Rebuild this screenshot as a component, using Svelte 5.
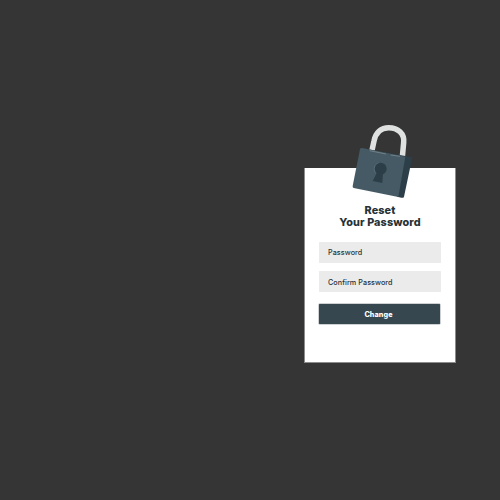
<script>
  let password = $state('');
  let confirmation = $state('');
</script>

<main>
  <form class="card" onsubmit={(event) => event.preventDefault()}>
    <svg class="lock" viewBox="0 0 240 270" aria-hidden="true">
      <path d="M96 106 L102 78 C107 51 124 38 146 38 C174 38 194 56 191 83 L187 126" fill="none" stroke="#dfe1e1" stroke-width="16.5" />
      <path d="M65 99 L212 126 Q217 127 216 131 L192 245 Q190 250 184 248 L171 245 L192 129 Z" fill="#2c3f48" />
      <path d="M66 99 L196 125 L175 246 L41 219 Q37 218 38 213 L60 103 Q61 98 66 99 Z" fill="#455a64" />
      <path d="M89 107 L138 117 M152 120 L180 124" fill="none" stroke="#879499" stroke-width="2" />
      <path d="M107 173 A18 18 0 0 1 116 144" fill="none" stroke="#687c85" stroke-width="2" />
      <circle cx="122" cy="161" r="18" fill="#2c3f48" />
      <path d="M112 170 L98 198 L127 204 L129 172 Z" fill="#2c3f48" />
    </svg>
    <h1><span>Reset</span><span>Your Password</span></h1>
    <input class="first" type="text" placeholder="Password" aria-label="Password" bind:value={password} />
    <input class="second" type="text" placeholder="Confirm Password" aria-label="Confirm Password" bind:value={confirmation} />
    <button type="submit">Change</button>
  </form>
</main>

<style>
  :global(body) { margin: 0; background: #353535; }
  main {
    box-sizing: border-box;
    width: 500px;
    height: 500px;
    padding: 168px 0 0 304px;
    background: #353535;
    font-family: Inter, "Liberation Sans", sans-serif;
  }
  .card {
    position: relative;
    box-sizing: border-box;
    display: flex;
    flex-direction: column;
    width: 152px;
    height: 195px;
    padding: 37px 14px 0;
    border: 1px solid #8c8c8c;
    border-top: 0;
    background: #fff;
    background-clip: padding-box;
  }
  .lock { position: absolute; left: 35px; top: -53px; width: 80px; height: 90px; }
  h1 {
    display: flex;
    flex-direction: column;
    align-items: center;
    margin: 0 0 13px;
    color: #263238;
    font-size: 10.8px;
    line-height: 12px;
    font-weight: 800;
    letter-spacing: 0.12px;
    white-space: nowrap;
  }
  input, button {
    box-sizing: border-box;
    width: 122px;
    height: 21px;
    border: 0;
    border-radius: 0.7px;
    font-family: inherit;
  }
  input {
    margin: 0 0 8px;
    padding: 0 9px;
    background: #ebebeb;
    color: #263238;
    font-size: 7.2px;
    font-weight: 500;
    letter-spacing: 0.08px;
    outline: none;
  }
  .second { margin-bottom: 12px; padding-top: 2px; }
  input::placeholder { color: #263238; opacity: 1; }
  button {
    width: 121px;
    height: 20px;
    padding: 0 2px 0 0;
    background: #37474f;
    color: #fff;
    font-size: 7.2px;
    font-weight: 800;
    letter-spacing: 0.1px;
    box-shadow: 0 0 0 0.5px rgba(55, 71, 79, 0.5);
  }
</style>
